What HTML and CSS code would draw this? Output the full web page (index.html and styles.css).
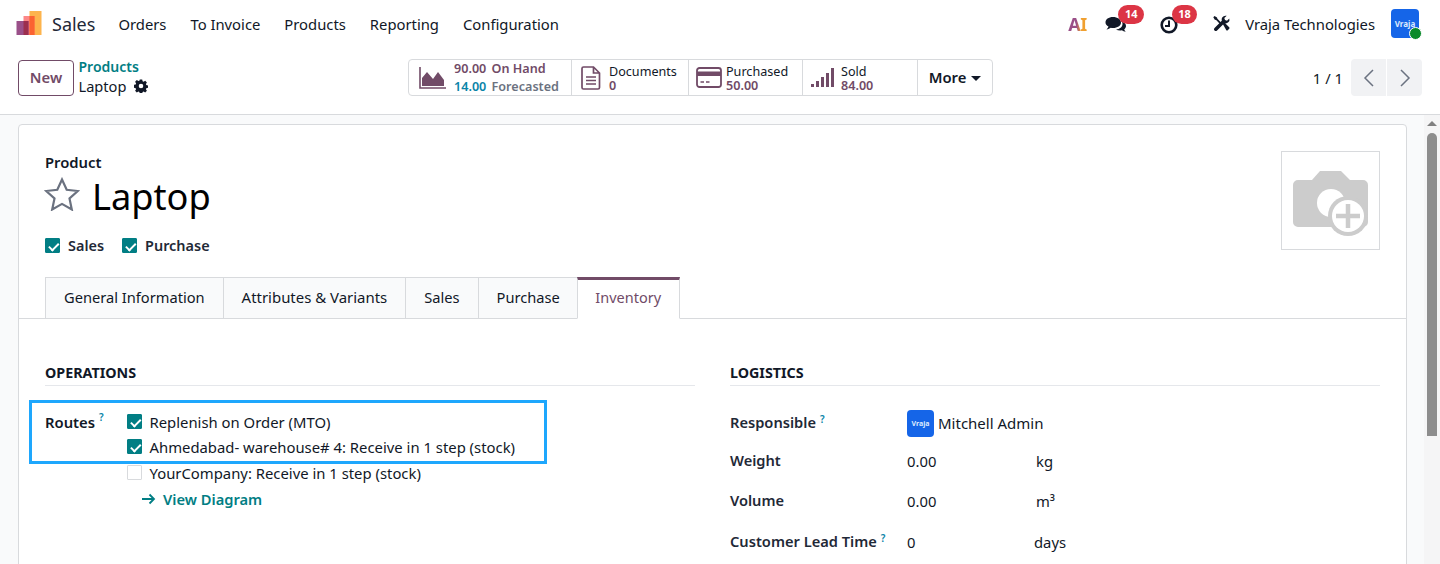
FILE: index.html
```html
<!DOCTYPE html>
<html lang="en">
<head>
<meta charset="utf-8">
<title>Laptop - Sales</title>
<link rel="stylesheet" href="styles.css">
</head>
<body>
<header class="navbar">
  <svg class="brand-logo" width="26" height="26" viewBox="0 0 26 26"><rect x="13.500" y="0" width="12" height="24" fill="#fdb44d"/><rect x="7.500" y="5" width="11" height="19" fill="#fb6a6a" opacity=".8"/><rect x="13.500" y="5" width="5" height="19" fill="#fb6331"/><rect x="0.500" y="10" width="12" height="14" fill="#9a5089"/><rect x="7.500" y="10" width="5" height="14" fill="#9c2f4e"/></svg>
  <span class="brand-name">Sales</span>
  <nav class="menu"><a>Orders</a><a>To Invoice</a><a>Products</a><a>Reporting</a><a>Configuration</a></nav>
  <div class="systray">
    <span class="ai-logo">AI</span>
    <span class="tray-icon chat">
      <svg width="22" height="20" viewBox="0 0 22 20"><path d="M8 3c4.400 0 8 2.300 8 5.500S12.400 14 8 14c-.8 0-1.500-.1-2.200-.2C4.700 14.600 3.200 15.200 1.500 15.400c1-.9 1.700-1.900 2-2.900C1.600 11.500.5 10.100.5 8.500.5 5.300 3.600 3 8 3z" fill="#111827"/><path d="M17 7.500c2.500.8 4 2.500 4 4.500 0 1.300-.7 2.500-1.800 3.300.2.900.7 1.700 1.500 2.400-1.500-.1-2.800-.7-3.800-1.400-.6.100-1.200.2-1.900.2-1.500 0-2.900-.4-4-1 3.800-.3 6.500-2.700 6.500-5.500 0-.9-.2-1.700-.5-2.500z" fill="#111827"/></svg>
      <b class="badge">14</b>
    </span>
    <span class="tray-icon clock">
      <svg width="18" height="18" viewBox="0 0 18 18"><circle cx="9" cy="9" r="7.300" fill="none" stroke="#111827" stroke-width="2.600"/><path d="M9 4.500V10H5" fill="none" stroke="#111827" stroke-width="2"/></svg>
      <b class="badge">18</b>
    </span>
    <svg class="tools" width="17" height="17" viewBox="0 0 17 17"><path d="M1.500 1 4 2.500l.4 1.300 4.600 4.600-1.300 1.300-4.600-4.600L1.800 4.700.3 2.200z" fill="#111827"/><path d="M9.700 8.800l1.500-1.500 5 5a1.100 1.100 0 0 1 0 1.500l-1.400 1.400a1.100 1.100 0 0 1-1.500 0z" fill="#111827"/><path d="M12.400.7a3.900 3.900 0 0 0-3.600 5L1.300 13.200a1.800 1.800 0 0 0 2.500 2.500l7.500-7.500a3.900 3.900 0 0 0 5-4.800L14 5.700l-2-.7-.7-2 2.400-2.200a3.900 3.900 0 0 0-1.300-.1z" fill="#111827"/></svg>
    <span class="company">Vraja Technologies</span>
    <span class="avatar-wrap"><span class="avatar">Vraja</span><i class="presence"></i></span>
  </div>
</header>

<section class="control-panel">
  <div class="cp-left">
    <button class="btn-new">New</button>
    <div class="breadcrumb">
      <a class="crumb-link">Products</a>
      <span class="crumb-current">Laptop
        <svg width="14" height="14" viewBox="0 0 14 14"><path fill="#111827" fill-rule="evenodd" d="M5.800.5h2.400l.4 1.800 1 .4 1.600-1 1.700 1.700-1 1.600.4 1 1.800.4v2.400l-1.800.4-.4 1 1 1.600-1.700 1.700-1.600-1-1 .4-.4 1.800H5.800l-.4-1.800-1-.4-1.600 1-1.700-1.700 1-1.600-.4-1-1.800-.4V5.800l1.800-.4.4-1-1-1.600 1.700-1.700 1.600 1 1-.4zM7 4.700a2.300 2.300 0 1 0 0 4.600 2.300 2.300 0 0 0 0-4.600z"/></svg>
      </span>
    </div>
  </div>
  <div class="stats">
    <div class="stat stat-hand">
      <svg width="27" height="22" viewBox="0 0 27 22"><path d="M1 0v21h26" fill="none" stroke="#714b67" stroke-width="1.600"/><path d="M3 19V11l5-6 6 7 5-7 6 8v6z" fill="#714b67"/></svg>
      <div class="stat-two"><span class="hand-line"><b>90.00</b> On Hand</span><span class="fc-line"><b>14.00</b> <em>Forecasted</em></span></div>
    </div>
    <div class="stat stat-docs">
      <svg width="20" height="24" viewBox="0 0 20 24"><path d="M2.500 1h10l6 6v14.500a1.500 1.500 0 0 1-1.500 1.500H2.500A1.500 1.500 0 0 1 1 21.500v-19A1.500 1.500 0 0 1 2.500 1z M12.500 1v6h6 M5 11h10M5 14.500h10M5 18h10" fill="none" stroke="#714b67" stroke-width="1.700"/></svg>
      <div class="stat-text"><span class="stat-label">Documents</span><span class="stat-value">0</span></div>
    </div>
    <div class="stat stat-purch">
      <svg width="26" height="21" viewBox="0 0 26 21"><rect x="1" y="1" width="24" height="19" rx="2.500" fill="none" stroke="#714b67" stroke-width="1.800"/><rect x="1" y="4.500" width="24" height="4.500" fill="#714b67"/><path d="M4.500 15h3.500M10 15h3.500" stroke="#714b67" stroke-width="1.500"/></svg>
      <div class="stat-text"><span class="stat-label">Purchased</span><span class="stat-value">50.00</span></div>
    </div>
    <div class="stat stat-sold">
      <svg width="23" height="21" viewBox="0 0 23 21"><g fill="#714b67"><rect x="0" y="17" width="3" height="3"/><rect x="5" y="14" width="3" height="6"/><rect x="10" y="10" width="3" height="10"/><rect x="15" y="6" width="3" height="14"/><rect x="20" y="1" width="3" height="19"/></g></svg>
      <div class="stat-text"><span class="stat-label">Sold</span><span class="stat-value">84.00</span></div>
    </div>
    <button class="stat-more">More <i class="caret"></i></button>
  </div>
  <div class="pager">
    <span class="pager-count">1 / 1</span>
    <div class="pager-btns">
      <button><svg width="12" height="18" viewBox="0 0 12 18"><path d="M10 1 2 9l8 8" fill="none" stroke="#6b7280" stroke-width="1.500"/></svg></button>
      <button><svg width="12" height="18" viewBox="0 0 12 18"><path d="m2 1 8 8-8 8" fill="none" stroke="#6b7280" stroke-width="1.500"/></svg></button>
    </div>
  </div>
</section>

<main class="content">
  <div class="sheet-area">
    <article class="sheet">
      <div class="title-block">
        <div class="title-main">
          <div class="product-label">Product</div>
          <div class="title-row">
            <svg width="36" height="34" viewBox="0 0 36 34"><path d="M18 2.500l4.700 10.300 11.100 1.200-8.300 7.500 2.300 11L18 26.900 8.200 32.500l2.300-11-8.300-7.500 11.100-1.200z" fill="none" stroke="#6b7280" stroke-width="2.200" stroke-linejoin="miter"/></svg>
            <h1>Laptop</h1>
          </div>
          <div class="opts">
            <label class="check-item"><i class="cb on"></i><span>Sales</span></label>
            <label class="check-item"><i class="cb on"></i><span>Purchase</span></label>
          </div>
        </div>
        <div class="photo">
          <svg width="76" height="66" viewBox="0 0 76 66"><path d="M5 10h14l8-9h21l9 9h13a5 5 0 0 1 5 5v37a5 5 0 0 1-5 5H5a5 5 0 0 1-5-5V15a5 5 0 0 1 5-5z" fill="#cccccc"/><circle cx="38" cy="33" r="14" fill="#fff"/><circle cx="55" cy="46" r="20" fill="#cccccc"/><circle cx="55" cy="46" r="16" fill="#fff"/><path d="M55 34v24M43 46h24" stroke="#cccccc" stroke-width="4.500"/></svg>
        </div>
      </div>
      <div class="tabs">
        <a class="tab">General Information</a><a class="tab tab-wide">Attributes &amp; Variants</a><a class="tab">Sales</a><a class="tab tab-narrow">Purchase</a><a class="tab active">Inventory</a>
      </div>
      <div class="tab-body">
        <section class="col">
          <h2>OPERATIONS</h2>
          <div class="routes">
            <div class="routes-label">Routes <sup>?</sup></div>
            <div class="routes-list">
              <label class="route"><i class="cb on"></i><span>Replenish on Order (MTO)</span></label>
              <label class="route"><i class="cb on"></i><span>Ahmedabad- warehouse# 4: Receive in 1 step (stock)</span></label>
              <label class="route"><i class="cb"></i><span>YourCompany: Receive in 1 step (stock)</span></label>
              <a class="diagram"><svg width="14" height="12" viewBox="0 0 14 12"><path d="M0 6h12M7.500 1.500 12 6l-4.500 4.500" fill="none" stroke="#017e84" stroke-width="1.800"/></svg>View Diagram</a>
            </div>
            <div class="highlight"></div>
          </div>
        </section>
        <section class="col">
          <h2>LOGISTICS</h2>
          <div class="fields">
            <div class="f-label">Responsible <sup>?</sup></div>
            <div class="f-value user"><span class="avatar small">Vraja</span>Mitchell Admin</div>
            <div class="f-label">Weight</div>
            <div class="f-value"><span class="num">0.00</span><span class="unit">kg</span></div>
            <div class="f-label">Volume</div>
            <div class="f-value"><span class="num">0.00</span><span class="unit">m³</span></div>
            <div class="f-label">Customer Lead Time <sup>?</sup></div>
            <div class="f-value"><span class="num">0</span><span class="unit days">days</span></div>
          </div>
        </section>
      </div>
    </article>
  </div>
  <div class="scrollbar"><i class="scroll-arrow"></i><div class="thumb"></div></div>
</main>
</body>
</html>
```
FILE: styles.css
```css
* { box-sizing: border-box; }
html, body { margin: 0; height: 564px; overflow: hidden; }
body {
  display: flex; flex-direction: column;
  font-family: "Noto Sans", "Open Sans", sans-serif;
  font-size: 14.800px; color: #111827; background: #fff;
}
a { text-decoration: none; }
button { font-family: inherit; }

/* navbar */
.navbar { height: 46px; flex: none; display: flex; align-items: center; padding: 2px 21px 0 16px; }
.brand-logo { flex: none; }
.brand-name { font-size: 18px; margin-left: 10px; color: #1f2937; }
.menu { display: flex; gap: 24px; margin-left: 23px; }
.menu a { color: #111827; }
.systray { margin-left: auto; display: flex; align-items: center; }
.ai-logo { font-weight: 700; font-size: 18px; letter-spacing: -.5px; background: linear-gradient(90deg, #9a4f88 0 40%, #f0a030 62%); -webkit-background-clip: text; background-clip: text; color: transparent; width: 21px; margin-top: -1px; }
.tray-icon { position: relative; display: block; }
.tray-icon svg { display: block; }
.chat { margin-left: 16px; width: 22px; height: 20px; }
.clock { margin-left: 33px; width: 18px; height: 18px; margin-top: 1px; }
.badge { position: absolute; left: 13px; top: -10px; height: 19px; min-width: 26px; padding: 0 6px; border-radius: 10px; background: #dc3545; color: #fff; font-size: 11px; font-weight: 700; line-height: 18px; text-align: center; }
.chat .badge { top: -9px; }
.clock .badge { left: 12px; top: -11px; min-width: 24px; }
.tools { margin-left: 35px; margin-top: -1px; }
.company { margin-left: 15px; color: #111827; }
.avatar-wrap { position: relative; margin-left: 16px; display: block; width: 28px; height: 29px; margin-top: -2px; }
.avatar { display: flex; align-items: center; justify-content: center; width: 28px; height: 29px; border-radius: 4px; background: #1565e8; color: #dbeafe; font-size: 8px; font-weight: 700; }
.presence { position: absolute; right: -3px; bottom: -2px; width: 13px; height: 13px; border-radius: 50%; background: #0a8a2a; border: 1.500px solid #fff; }

/* control panel */
.control-panel { height: 69px; flex: none; display: flex; align-items: center; padding: 0 18px 1px; border-bottom: 1px solid #d8dadd; position: relative; }
.cp-left { display: flex; align-items: center; width: 390px; flex: none; margin-top: -4px; }
.btn-new { width: 56px; height: 36px; background: #fff; border: 1px solid #714b67; border-radius: 4px; color: #714b67; font-weight: 600; font-size: 14.800px; padding: 0 0 2px; }
.breadcrumb { display: flex; flex-direction: column; margin-left: 4.500px; line-height: 20px; margin-top: -2px; }
.crumb-link { color: #017e84; font-weight: 600; font-size: 14px; }
.crumb-current { display: flex; align-items: center; gap: 8px; color: #111827; font-size: 14.600px; margin-top: -1px; }
.stats { display: flex; height: 37px; margin-top: -4px; border: 1px solid #d8dadd; border-radius: 4px; background: #fff; flex: none; }
.stat { display: flex; align-items: center; border-right: 1px solid #d8dadd; padding-left: 10px; color: #714b67; font-size: 12.600px; line-height: 14.500px; }
.stat svg { flex: none; }
.stat-hand { width: 163px; }
.stat-docs { width: 117px; padding-left: 9px; }
.stat-purch { width: 114px; padding-left: 7px; }
.stat-sold { width: 115px; padding-left: 8px; }
.stat-two { margin-left: 8px; display: flex; flex-direction: column; gap: 3.500px; font-weight: 600; color: #714b67; white-space: nowrap; padding-top: 2px; }
.stat-two b { font-weight: 600; margin-right: 2px; }
.fc-line b { color: #0a84a8; }
.fc-line em { font-style: normal; color: #6b7280; }
.stat-text { margin-left: 8px; display: flex; flex-direction: column; padding-top: 3px; }
.stat-purch .stat-text { margin-left: 4px; }
.stat-sold .stat-text { margin-left: 7px; }
.stat-label { color: #111827; }
.stat-value { font-weight: 600; color: #714b67; }
.stat-more { width: 74px; border: 0; background: none; font-weight: 600; font-size: 14.800px; color: #111827; padding: 0 0 2px 0; white-space: nowrap; }
.caret { display: inline-block; border: 5px solid transparent; border-top: 5.500px solid #111827; border-bottom: 0; vertical-align: 2px; margin-left: 1px; }
.pager { margin-left: auto; display: flex; align-items: center; gap: 8px; margin-top: -4px; }
.pager-btns { display: flex; gap: 1px; }
.pager-btns button { width: 35px; height: 37px; border: 0; background: #f1f2f4; padding: 0; display: flex; align-items: center; justify-content: center; }
.pager-btns button:first-child { border-radius: 4px 0 0 4px; }
.pager-btns button:last-child { border-radius: 0 4px 4px 0; }

/* content */
.content { flex: 1; min-height: 0; display: flex; background: #f9fafb; overflow: hidden; }
.sheet-area { flex: 1; padding: 9px 0 0 18px; min-width: 0; }
.sheet { width: 1389px; height: 600px; background: #fff; border: 1px solid #d8dadd; border-radius: 4px 4px 0 0; }
.scrollbar { width: 16px; flex: none; padding: 6px 3px 0; background: #f5f5f6; }
.scroll-arrow { display: block; margin: 0 auto 7px; width: 0; height: 0; border: 5px solid transparent; border-top: 0; border-bottom: 5px solid #808080; }
.thumb { width: 10px; height: 303px; border-radius: 5px 5px 0 0; background: #8d8d8d; }

.title-block { display: flex; justify-content: space-between; padding: 26px 26px 0 26px; height: 152px; }
.product-label { font-weight: 600; line-height: 23px; height: 23px; color: #111827; }
.title-row { display: flex; align-items: center; gap: 12px; height: 45px; }
.title-row svg { margin: -5px 0 0 -1px; }
h1 { margin: 0; font-size: 36.200px; font-weight: 400; color: #000; line-height: 45px; }
.opts { display: flex; gap: 18px; margin-top: 17px; }
.check-item { display: flex; align-items: center; gap: 8px; font-weight: 600; font-size: 14.450px; color: #1f2937; }
.cb { display: block; flex: none; width: 15px; height: 15px; border: 1px solid #d8dadd; border-radius: 1px; background: #fff; position: relative; }
.cb.on { background: #017e84; border-color: #017e84; }
.cb.on::after { content: ""; position: absolute; left: 4.500px; top: 2px; width: 4px; height: 7.500px; border: solid #fff; border-width: 0 2px 2px 0; transform: rotate(45deg); }
.photo { width: 99px; height: 99px; border: 1px solid #d8dadd; display: flex; align-items: center; justify-content: center; padding: 4px 0 0 1px; }

.tabs { display: flex; height: 42px; border-bottom: 1px solid #d8dadd; padding-left: 26px; }
.tab { height: 42px; padding: 0 18px 2px; display: flex; align-items: center; background: #f9fafb; border: 1px solid #d8dadd; margin-right: -1px; color: #111827; font-size: 14.650px; }
.tab-wide { font-size: 14.950px; }
.tab-narrow { padding-right: 17px; }
.tab.active { background: #fff; border-top: 3px solid #714b67; border-bottom-color: #fff; color: #714b67; padding: 0 18px 4px 17.500px; font-size: 14.500px; position: relative; }

.tab-body { display: flex; gap: 35px; padding: 0 26px; }
.col { width: 650px; flex: none; }
h2 { margin: 44px 0 0; font-size: 14.300px; line-height: 20px; font-weight: 700; color: #111827; border-bottom: 1px solid #e5e7eb; height: 23px; }

.routes { display: flex; position: relative; margin-top: 24px; }
.routes-label { width: 82px; font-weight: 600; line-height: 25px; flex: none; }
sup { color: #0a84a8; font-size: 10px; font-weight: 600; line-height: 0; vertical-align: 7px; margin-left: 0; }
.routes-list { display: flex; flex-direction: column; margin-top: -1px; }
.route { display: flex; align-items: center; gap: 7.500px; height: 25.600px; font-size: 14.850px; }
.route:nth-child(2) { margin-top: -.6px; }
.route:nth-child(3) { margin-top: .6px; }
.diagram { display: flex; align-items: center; gap: 7px; color: #017e84; font-weight: 600; height: 26px; margin-left: 15px; font-size: 14.700px; }
.highlight { position: absolute; left: -16.500px; top: -10px; width: 518.500px; height: 64px; border: 3px solid #1ea7fd; pointer-events: none; }

.fields { display: grid; grid-template-columns: 177px 1fr; grid-template-rows: 36px 40px 40px 42px; margin-top: 19px; }
.f-label { font-weight: 600; display: flex; align-items: center; gap: 4px; color: #1f2937; padding-bottom: 2px; font-size: 14.650px; }
.f-label sup { margin-top: -6px; }
.f-value { display: flex; align-items: center; }
.user { gap: 4px; font-size: 15px; }
.avatar.small { width: 27px; height: 27px; font-size: 7px; }
.num { width: 129px; }
.unit { width: 40px; }
.days { margin-left: -2px; }
```
